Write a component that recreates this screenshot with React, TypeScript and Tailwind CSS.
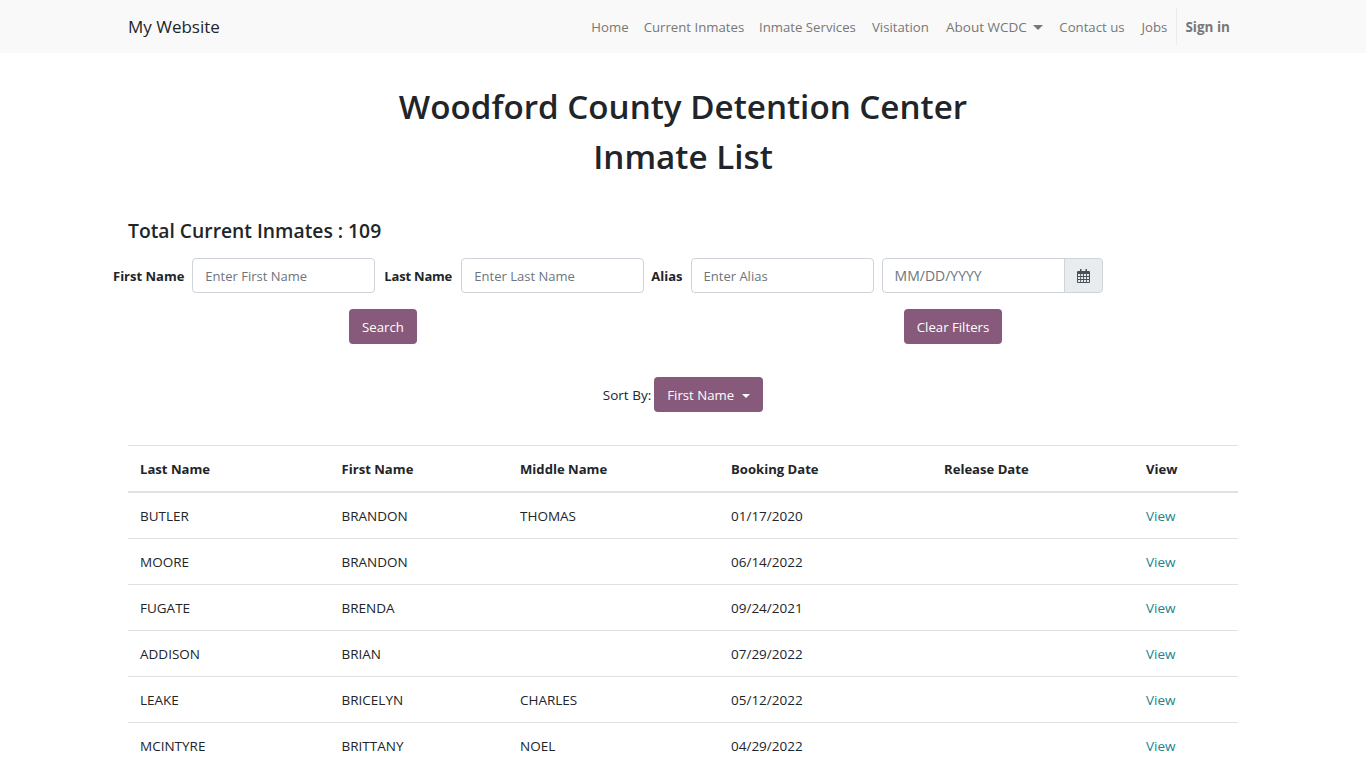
import React from 'react';

const navLinks = [
  { label: 'Home', width: 'w-[53px]' },
  { label: 'Current Inmates', width: 'w-[115px]' },
  { label: 'Inmate Services', width: 'w-[112px]' },
  { label: 'Visitation', width: 'w-[74px]' },
];

const inmates = [
  { last: 'BUTLER', first: 'BRANDON', middle: 'THOMAS', booked: '01/17/2020' },
  { last: 'MOORE', first: 'BRANDON', middle: '', booked: '06/14/2022' },
  { last: 'FUGATE', first: 'BRENDA', middle: '', booked: '09/24/2021' },
  { last: 'ADDISON', first: 'BRIAN', middle: '', booked: '07/29/2022' },
  { last: 'LEAKE', first: 'BRICELYN', middle: 'CHARLES', booked: '05/12/2022' },
  { last: 'MCINTYRE', first: 'BRITTANY', middle: 'NOEL', booked: '04/29/2022' },
];

const inputClass =
  'h-[35px] w-[183px] rounded border border-[#ced4da] bg-white px-3 text-[13px] text-[#495057] placeholder:text-[#6c757d] outline-none';
const buttonClass =
  'h-[35px] rounded bg-[#875a7b] pt-[2px] text-[13.2px] text-white';

function CalendarIcon() {
  return (
    <svg width="13" height="14" viewBox="0 0 13 14" className="text-[#495057]">
      <path
        fill="currentColor"
        fillRule="evenodd"
        d="M3 0h1.5v2h4V0H10v2h2a1 1 0 0 1 1 1v10a1 1 0 0 1-1 1H1a1 1 0 0 1-1-1V3a1 1 0 0 1 1-1h2V0zM1 5v2h2.2V5H1zm3.1 0v2h2V5h-2zm2.9 0v2h2V5H7zm2.9 0v2H12V5H9.900zM1 7.900V10h2.200V7.900H1zm3.100 0V10h2V7.900h-2zm2.900 0V10h2V7.900H7zm2.900 0V10H12V7.900H9.900zM1 10.900V13h2.200v-2.100H1zm3.100 0V13h2v-2.100h-2zm2.900 0V13h2v-2.100H7zm2.900 0V13H12v-2.100H9.900z"
      />
    </svg>
  );
}

export default function App() {
  return (
    <div className="h-screen overflow-hidden bg-white font-['Open_Sans',sans-serif] text-[13.5px] text-[#212529]">
      <nav className="h-[53px] bg-[#f9f9f9]">
        <div className="mx-auto flex h-full w-[1110px] items-center justify-between">
          <a className="text-[17px] text-[#212529]">My Website</a>
          <ul className="flex items-center pr-[8px] text-[13.2px] whitespace-nowrap text-[#777]">
            {navLinks.map((link) => (
              <li key={link.label} className={link.width + ' pt-[2px] text-center'}>{link.label}</li>
            ))}
            <li className="flex w-[114px] items-center justify-center gap-[6px] pt-[2px] text-[13.5px]">
              About WCDC
              <span className="inline-block h-0 w-0 border-x-[5px] border-t-[5px] border-x-transparent border-t-[#777]" />
            </li>
            <li className="w-[81px] pt-[2px] text-center">Contact us</li>
            <li className="w-[44px] pt-[2px] text-center">Jobs</li>
            <li className="flex h-[37px] items-center border-l border-[#e9ecef] pt-[2px] pl-2 text-[13.5px] font-bold">Sign in</li>
          </ul>
        </div>
      </nav>

      <main className="mx-auto w-[1110px]">
        <h1 className="mt-[29px] text-center text-[33.2px] leading-[50px] font-semibold">
          Woodford County Detention Center
          <br />
          Inmate List
        </h1>

        <h2 className="mt-[34px] text-[19.300px] leading-[30px] font-semibold">Total Current Inmates : 109</h2>

        <div className="mt-[12px] -ml-[15px] flex items-center text-[13px]">
          <label className="mr-2 pt-[2px] font-bold">First Name</label>
          <input className={inputClass} placeholder="Enter First Name" />
          <label className="mr-[9px] ml-[9px] w-[68px] pt-[2px] font-bold tracking-[-0.2px] whitespace-nowrap">Last Name</label>
          <input className={inputClass} placeholder="Enter Last Name" />
          <label className="mr-2 ml-[7px] pt-[2px] font-bold">Alias</label>
          <input className={inputClass} placeholder="Enter Alias" />
          <div className="ml-2 flex">
            <input
              className="h-[35px] w-[183px] rounded-l border border-[#ced4da] bg-white px-3 text-[14px] placeholder:text-[#6c757d] outline-none"
              placeholder="MM/DD/YYYY"
            />
            <span className="-ml-px flex h-[35px] w-[39px] items-center justify-center rounded-r border border-[#ced4da] bg-[#e9ecef]">
              <CalendarIcon />
            </span>
          </div>
        </div>

        <div className="mt-4 flex">
          <button className={buttonClass + ' ml-[221px] w-[68px]'}>Search</button>
          <button className={buttonClass + ' ml-[487px] w-[98px]'}>Clear Filters</button>
        </div>

        <div className="mt-[33px] flex items-center justify-center gap-[3px]">
          <span className="pt-[2px]">Sort By:</span>
          <button className={buttonClass + ' flex w-[109px] items-center justify-center gap-[8px]'}>
            First Name
            <span className="inline-block h-0 w-0 border-x-[4.5px] border-t-[4.5px] border-x-transparent border-t-white" />
          </button>
        </div>

        <table className="mt-[33px] w-full table-fixed border-collapse">
          <colgroup>
            <col className="w-[201.500px]" />
            <col className="w-[178.500px]" />
            <col className="w-[211px]" />
            <col className="w-[213px]" />
            <col className="w-[202px]" />
            <col />
          </colgroup>
          <thead>
            <tr className="h-[46px] border-y border-t-[#dee2e6] border-b-[#dee2e6] [border-bottom-width:2px] text-left text-[13.1px] [&>th]:px-3 [&>th]:pt-[4px] [&>th]:font-bold">
              <th>Last Name</th>
              <th>First Name</th>
              <th>Middle Name</th>
              <th>Booking Date</th>
              <th>Release Date</th>
              <th>View</th>
            </tr>
          </thead>
          <tbody>
            {inmates.map((inmate, index) => (
              <tr
                key={inmate.last}
                className={
                  index === 0
                    ? 'h-[47px] border-b border-[#dee2e6] [&>td]:px-3 [&>td]:pt-[1px]'
                    : 'h-[46px] border-b border-[#dee2e6] [&>td]:px-3 [&>td]:pt-[2px]'
                }
              >
                <td>{inmate.last}</td>
                <td>{inmate.first}</td>
                <td>{inmate.middle}</td>
                <td>{inmate.booked}</td>
                <td></td>
                <td className="text-[#21838c]">View</td>
              </tr>
            ))}
          </tbody>
        </table>
      </main>
    </div>
  );
}
